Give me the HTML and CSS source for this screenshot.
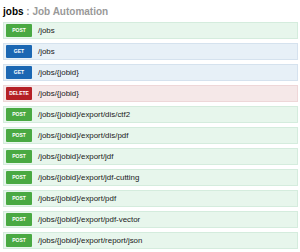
FILE: index.html
```html
<!DOCTYPE html>
<html lang="en">
<head>
  <meta charset="UTF-8">
  <title>jobs : Job Automation</title>
  <link rel="stylesheet" href="styles.css">
</head>
<body>
  <div class="resource">
    <h2 class="heading">jobs <span class="desc">: Job Automation</span></h2>
    <ul class="operations">
      <li class="op post"><span class="method">POST</span><span class="path">/jobs</span></li>
      <li class="op get"><span class="method">GET</span><span class="path">/jobs</span></li>
      <li class="op get"><span class="method">GET</span><span class="path">/jobs/{jobid}</span></li>
      <li class="op delete"><span class="method">DELETE</span><span class="path">/jobs/{jobid}</span></li>
      <li class="op post"><span class="method">POST</span><span class="path">/jobs/{jobid}/export/dis/ctf2</span></li>
      <li class="op post"><span class="method">POST</span><span class="path">/jobs/{jobid}/export/dis/pdf</span></li>
      <li class="op post"><span class="method">POST</span><span class="path">/jobs/{jobid}/export/jdf</span></li>
      <li class="op post"><span class="method">POST</span><span class="path">/jobs/{jobid}/export/jdf-cutting</span></li>
      <li class="op post"><span class="method">POST</span><span class="path">/jobs/{jobid}/export/pdf</span></li>
      <li class="op post"><span class="method">POST</span><span class="path">/jobs/{jobid}/export/pdf-vector</span></li>
      <li class="op post"><span class="method">POST</span><span class="path">/jobs/{jobid}/export/report/json</span></li>
    </ul>
  </div>
</body>
</html>
```

FILE: styles.css
```css
body {
  margin: 0;
  padding: 0 2px 0 3px;
  font-family: "Liberation Sans", Arial, sans-serif;
  color: #222;
  background: #fff;
}
.heading {
  font-size: 10px;
  font-weight: bold;
  margin: 0;
  padding: 6px 0 5px 0;
  color: #000;
}
.desc {
  color: #999;
}
.operations {
  list-style: none;
  margin: 0;
  padding: 0;
  display: flex;
  flex-direction: column;
  gap: 4px;
}
.op {
  display: flex;
  align-items: center;
  height: 13px;
  padding: 1px 2px;
  border: 1px solid;
}
.method {
  width: 26px;
  height: 13px;
  line-height: 13px;
  text-align: center;
  color: #fff;
  font-size: 5px;
  font-weight: bold;
  border-radius: 1px;
}
.path {
  margin-left: 6px;
  font-size: 7.9px;
  color: #1a1a1a;
}
.post {
  background: #e7f6ec;
  border-color: #d4ecdd;
}
.post .method {
  background: #49a942;
}
.get {
  background: #e7f0f7;
  border-color: #d5e2ee;
}
.get .method {
  background: #1b67b3;
}
.delete {
  background: #f5e8e8;
  border-color: #eed7d8;
}
.delete .method {
  background: #b52025;
}
```
